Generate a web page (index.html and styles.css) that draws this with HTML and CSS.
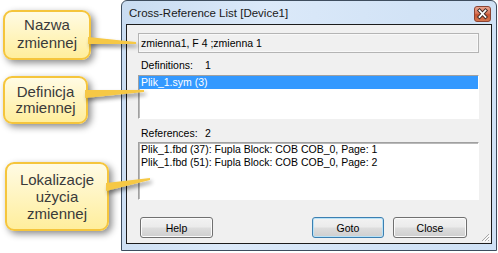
FILE: index.html
```html
<!DOCTYPE html>
<html>
<head>
<meta charset="utf-8">
<link rel="stylesheet" href="styles.css">
</head>
<body>
<div class="stage">
  <div class="notes">
    <div class="note n1">Nazwa<br>zmiennej</div>
    <div class="note n2">Definicja<br>zmiennej</div>
    <div class="note n3">Lokalizacje<br>użycia<br>zmiennej</div>
  </div>
  <div class="window">
    <div class="titlebar">
      <span class="title">Cross-Reference List [Device1]</span>
      <span class="close">
        <svg width="17" height="16" viewBox="0 0 17 16">
          <defs>
            <linearGradient id="cg" x1="0" y1="0" x2="0" y2="1">
              <stop offset="0" stop-color="#eba791"/>
              <stop offset="0.45" stop-color="#d8775c"/>
              <stop offset="0.55" stop-color="#c8522f"/>
              <stop offset="1" stop-color="#d77a52"/>
            </linearGradient>
          </defs>
          <rect x="0.5" y="0.5" width="16" height="15" rx="2.5" fill="url(#cg)" stroke="#8b4434"/>
          <path d="M5.5 4.5 L11.5 11 M11.5 4.5 L5.5 11" stroke="#3d2a26" stroke-width="3.6" stroke-linecap="square"/>
          <path d="M5.5 4.5 L11.5 11 M11.5 4.5 L5.5 11" stroke="#ffffff" stroke-width="1.8" stroke-linecap="square"/>
        </svg>
      </span>
    </div>
    <div class="client">
      <div class="field">zmienna1, F 4 ;zmienna 1</div>
      <div class="label"><span class="lbl">Definitions:</span><span>1</span></div>
      <div class="list defs">
        <div class="row sel">Plik_1.sym (3)</div>
      </div>
      <div class="label refs-label"><span class="lbl">References:</span><span>2</span></div>
      <div class="list refs">
        <div class="row">Plik_1.fbd (37): Fupla Block: COB COB_0, Page: 1</div>
        <div class="row">Plik_1.fbd (51): Fupla Block: COB COB_0, Page: 2</div>
      </div>
      <div class="buttons">
        <button class="btn help">Help</button>
        <button class="btn goto">Goto</button>
        <button class="btn close-btn">Close</button>
      </div>
      <svg class="grip" width="10" height="10" viewBox="0 0 10 10">
        <path d="M9 2 L2 9 M9 5 L5 9 M9 8 L8 9" stroke="#a8a8a8" stroke-width="1"/>
        <path d="M10 3 L3 10 M10 6 L6 10" stroke="#ffffff" stroke-width="1"/>
      </svg>
    </div>
  </div>
  <svg class="pointers" width="498" height="253" viewBox="0 0 498 253">
    <defs>
      <filter id="sh" x="-20%" y="-100%" width="140%" height="400%">
        <feGaussianBlur in="SourceAlpha" stdDeviation="2.2"/>
        <feOffset dx="2" dy="3" result="b"/>
        <feComponentTransfer><feFuncA type="linear" slope="0.45"/></feComponentTransfer>
        <feMerge><feMergeNode/><feMergeNode in="SourceGraphic"/></feMerge>
      </filter>
    </defs>
    <g filter="url(#sh)" fill="#f6c844">
      <polygon points="88,37 136,42 136,44 88,44"/>
      <polygon points="85,90 144,90 144,92 85,98"/>
      <polygon points="106,183 150,178 150,180 106,191"/>
    </g>
  </svg>
</div>
</body>
</html>
```

FILE: styles.css
```css
body {
  margin: 0;
  background: #ffffff;
  width: 498px;
  height: 253px;
  overflow: hidden;
  font-family: "Liberation Sans", Arial, sans-serif;
}

.stage {
  position: relative;
  display: flex;
  width: 498px;
  height: 253px;
}

.notes {
  width: 121px;
  flex: none;
  display: flex;
  flex-direction: column;
  align-items: flex-start;
}

.note {
  box-sizing: border-box;
  display: flex;
  align-items: center;
  justify-content: center;
  text-align: center;
  font-size: 15px;
  line-height: 17px;
  color: #3a3a3a;
  border: 2px solid #f5c53c;
  border-radius: 9px;
  background: linear-gradient(#fffbe4, #ffee9c);
  box-shadow: 3px 3px 7px rgba(0, 0, 0, 0.45);
  position: relative;
  z-index: 2;
}

.n1 {
  margin: 10px 0 0 3px;
  width: 88px;
  height: 50px;
  line-height: 18px;
  padding-bottom: 3px;
}

.n2 {
  margin: 16px 0 0 3px;
  width: 85px;
  height: 48px;
  line-height: 16px;
}

.n3 {
  margin: 38px 0 0 5px;
  width: 104px;
  height: 69px;
}

.window {
  box-sizing: border-box;
  width: 376px;
  height: 251px;
  flex: none;
  border: 1px solid #3e4d5e;
  border-radius: 6px 6px 0 0;
  background: linear-gradient(100deg, #c9dcf1 0%, #dbe9f9 35%, #d2e3f6 70%, #cfe1f5 100%);
  padding: 0 4px 6px;
  display: flex;
  flex-direction: column;
}

.titlebar {
  height: 23px;
  flex: none;
  display: flex;
  align-items: center;
  justify-content: space-between;
  padding: 0 1px 0 3px;
}

.title {
  font-size: 11.5px;
  color: #1a1a1a;
  padding-top: 1px;
}

.close {
  display: flex;
  margin-top: 2px;
}

.client {
  box-sizing: border-box;
  height: 220px;
  flex: none;
  border: 1px solid #1c1c1c;
  background: #f0f0f0;
  position: relative;
  padding: 8px 12px 0 11px;
  display: flex;
  flex-direction: column;
  font-size: 10.5px;
  color: #000;
}

.field {
  box-sizing: border-box;
  height: 20px;
  border: 1px solid #b4b4b4;
  box-shadow: inset 0 0 0 1px #f8f8f8;
  padding-left: 2px;
  line-height: 18px;
  white-space: nowrap;
}

.label {
  display: flex;
  margin-top: 6px;
  line-height: 13px;
  padding-left: 3px;
}

.lbl {
  width: 64px;
}

.list {
  box-sizing: border-box;
  margin-top: 3px;
  background: #ffffff;
  border: 1px solid;
  border-color: #a0a0a0 #ffffff #ffffff #a0a0a0;
  box-shadow: inset 1px 1px 0 #b9b9b9;
}

.defs {
  height: 44px;
}

.refs-label {
  margin-top: 8px;
}

.refs {
  margin-top: 2px;
  height: 58px;
}

.row {
  line-height: 13px;
  padding-left: 2px;
  white-space: nowrap;
}

.sel {
  background: #3399ff;
  color: #ffffff;
}

.buttons {
  display: flex;
  margin-top: 17px;
  padding-left: 2px;
}

.btn {
  box-sizing: border-box;
  width: 73px;
  height: 21px;
  padding: 0;
  font-family: "Liberation Sans", Arial, sans-serif;
  font-size: 10.5px;
  color: #000;
  border: 1px solid #707070;
  border-radius: 3px;
  background: linear-gradient(#f2f2f2 0%, #ebebeb 48%, #dddddd 52%, #cfcfcf 100%);
  box-shadow: inset 0 0 0 1px #fbfbfb;
}

.goto {
  margin-left: 99px;
  width: 72px;
  border-color: #3c7fb1;
  box-shadow: inset 0 0 0 1px #b8e2f7;
}

.close-btn {
  margin-left: 9px;
  width: 74px;
}

.grip {
  position: absolute;
  right: 1px;
  bottom: 1px;
}

.pointers {
  position: absolute;
  left: 0;
  top: 0;
  z-index: 3;
  pointer-events: none;
}
```
